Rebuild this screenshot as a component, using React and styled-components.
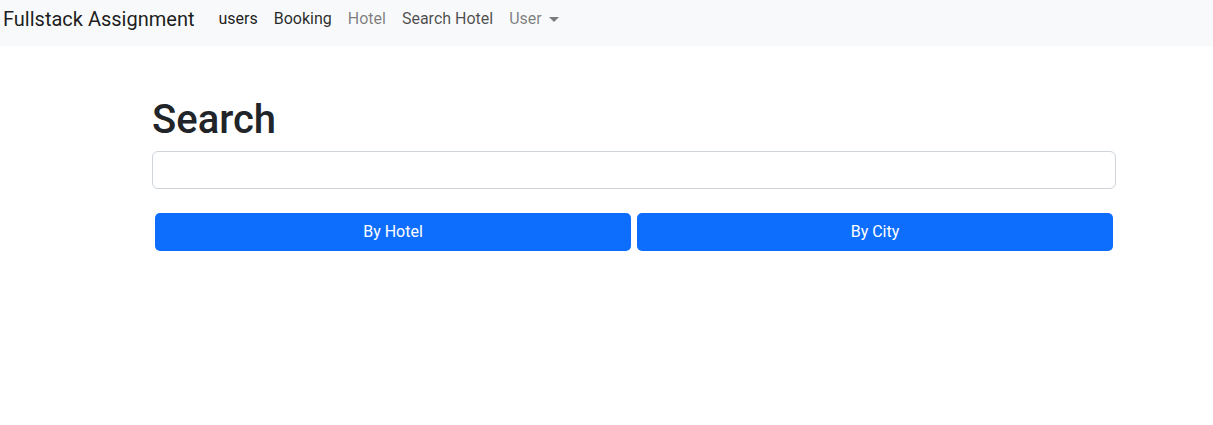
import React from 'react';
import styled, { createGlobalStyle } from 'styled-components';

const GlobalStyle = createGlobalStyle`
  body {
    margin: 0;
    font-family: Roboto, "Liberation Sans", sans-serif;
    color: #212529;
    background: #ffffff;
  }
  * {
    box-sizing: border-box;
  }
`;

const Navbar = styled.nav`
  display: flex;
  align-items: center;
  height: 46px;
  padding: 0 0 8px 3px;
  background: #f8f9fa;
`;

const Brand = styled.a`
  font-size: 20px;
  line-height: 30px;
  color: rgba(0, 0, 0, 0.9);
  margin-right: 16px;
  text-decoration: none;
`;

const NavList = styled.div`
  display: flex;
  align-items: center;
`;

const NavLink = styled.a`
  font-size: 16px;
  line-height: 24px;
  padding: 0 8px;
  color: ${(p) => p.$tone};
  text-decoration: none;
  display: flex;
  align-items: center;
`;

const Caret = styled.span`
  display: inline-block;
  margin-left: 7px;
  border-top: 5px solid currentColor;
  border-left: 5px solid transparent;
  border-right: 5px solid transparent;
  margin-top: 1px;
`;

const Main = styled.main`
  padding: 50px 0 0 152px;
  width: 1116px;
`;

const Title = styled.h1`
  font-size: 40px;
  font-weight: 500;
  line-height: 48px;
  margin: 0 0 7px;
`;

const Input = styled.input`
  display: block;
  width: 100%;
  height: 38px;
  border: 1px solid #ced4da;
  border-radius: 6px;
  padding: 6px 12px;
  font-size: 16px;
  font-family: inherit;
  outline: none;
`;

const ButtonRow = styled.div`
  display: flex;
  gap: 6px;
  padding: 0 3px;
  margin-top: 24px;
`;

const Button = styled.button`
  flex: 1;
  height: 38px;
  border: none;
  border-radius: 5px;
  padding: 0 0 2px;
  background: #0d6efd;
  color: #ffffff;
  font-family: inherit;
  font-size: 16px;
  cursor: pointer;
`;

export default function App() {
  return (
    <>
      <GlobalStyle />
      <Navbar>
        <Brand href="#">Fullstack Assignment</Brand>
        <NavList>
          <NavLink href="#" $tone="rgba(0,0,0,0.9)">users</NavLink>
          <NavLink href="#" $tone="rgba(0,0,0,0.85)">Booking</NavLink>
          <NavLink href="#" $tone="rgba(0,0,0,0.5)">Hotel</NavLink>
          <NavLink href="#" $tone="rgba(0,0,0,0.7)">Search Hotel</NavLink>
          <NavLink href="#" $tone="rgba(0,0,0,0.5)">
            User
            <Caret />
          </NavLink>
        </NavList>
      </Navbar>
      <Main>
        <Title>Search</Title>
        <Input type="text" />
        <ButtonRow>
          <Button>By Hotel</Button>
          <Button>By City</Button>
        </ButtonRow>
      </Main>
    </>
  );
}
